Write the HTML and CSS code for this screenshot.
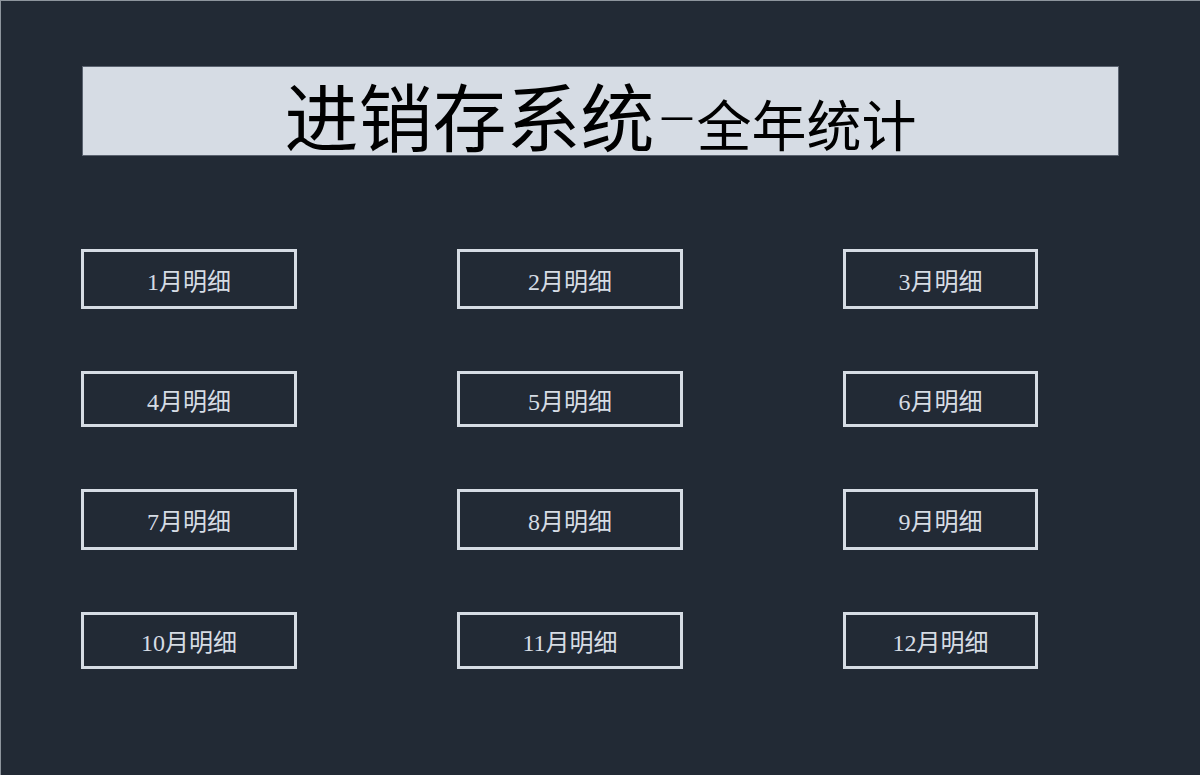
FILE: index.html
```html
<!DOCTYPE html>
<html lang="zh-CN">
<head>
    <meta charset="UTF-8">
    <meta name="viewport" content="width=device-width, initial-scale=1.0">
    <title>进销存系统-全年统计</title>
    <link rel="stylesheet" href="styles.css">
</head>
<body>
    <div class="sheet">
        <div class="banner">
            <span class="title-main">进销存系统</span><span class="title-dash">-</span><span class="title-sub">全年统计</span>
        </div>

        <!-- 每月明细入口 -->
        <div class="months">
            <button type="button" class="month-btn">1月明细</button>
            <button type="button" class="month-btn">2月明细</button>
            <button type="button" class="month-btn">3月明细</button>
            <button type="button" class="month-btn">4月明细</button>
            <button type="button" class="month-btn">5月明细</button>
            <button type="button" class="month-btn">6月明细</button>
            <button type="button" class="month-btn">7月明细</button>
            <button type="button" class="month-btn">8月明细</button>
            <button type="button" class="month-btn">9月明细</button>
            <button type="button" class="month-btn">10月明细</button>
            <button type="button" class="month-btn">11月明细</button>
            <button type="button" class="month-btn">12月明细</button>
        </div>
    </div>
</body>
</html>
```

FILE: styles.css
```css
html, body {
    margin: 0;
    height: 100%;
}
body {
    background-color: #222a35;
    font-family: "Liberation Serif", "Noto Sans CJK SC", serif;
    border-top: 1px solid #8e959d;
    border-left: 1px solid #8e959d;
    box-sizing: border-box;
    overflow: hidden;
}
.sheet {
    padding: 65px 0 0 80px;
}
.banner {
    box-sizing: border-box;
    width: 1037px;
    height: 90px;
    margin-left: 1px;
    padding-top: 10px;
    background-color: #d6dce4;
    border: 1px solid #5b6370;
    display: flex;
    justify-content: center;
    align-items: baseline;
    color: #000;
    font-family: "Noto Sans CJK SC", sans-serif;
    line-height: 1;
}
.title-main {
    font-size: 74px;
}
/* 连字符拉长一点，和标题字重对齐 */
.title-dash {
    display: inline-block;
    width: 20px;
    margin: 0 11px;
    text-align: center;
    font-family: "Liberation Sans", sans-serif;
    font-size: 60px;
    transform: translate(2px, -9px) scaleX(2.1) scaleY(0.55);
}
.title-sub {
    font-size: 55px;
}
.months {
    display: grid;
    grid-template-columns: 216px 226px 195px;
    grid-template-rows: 60px 56px 61px 57px;
    column-gap: 160px;
    row-gap: 62px;
    margin-top: 93px;
}
.month-btn {
    box-sizing: border-box;
    background: none;
    border: 3px solid #d6dce4;
    color: #d6dce4;
    padding: 0;
    font-family: "Liberation Serif", "Noto Sans CJK SC", serif;
    font-size: 24px;
    cursor: pointer;
}
.month-btn:hover {
    background-color: #2b3542;
}
```
